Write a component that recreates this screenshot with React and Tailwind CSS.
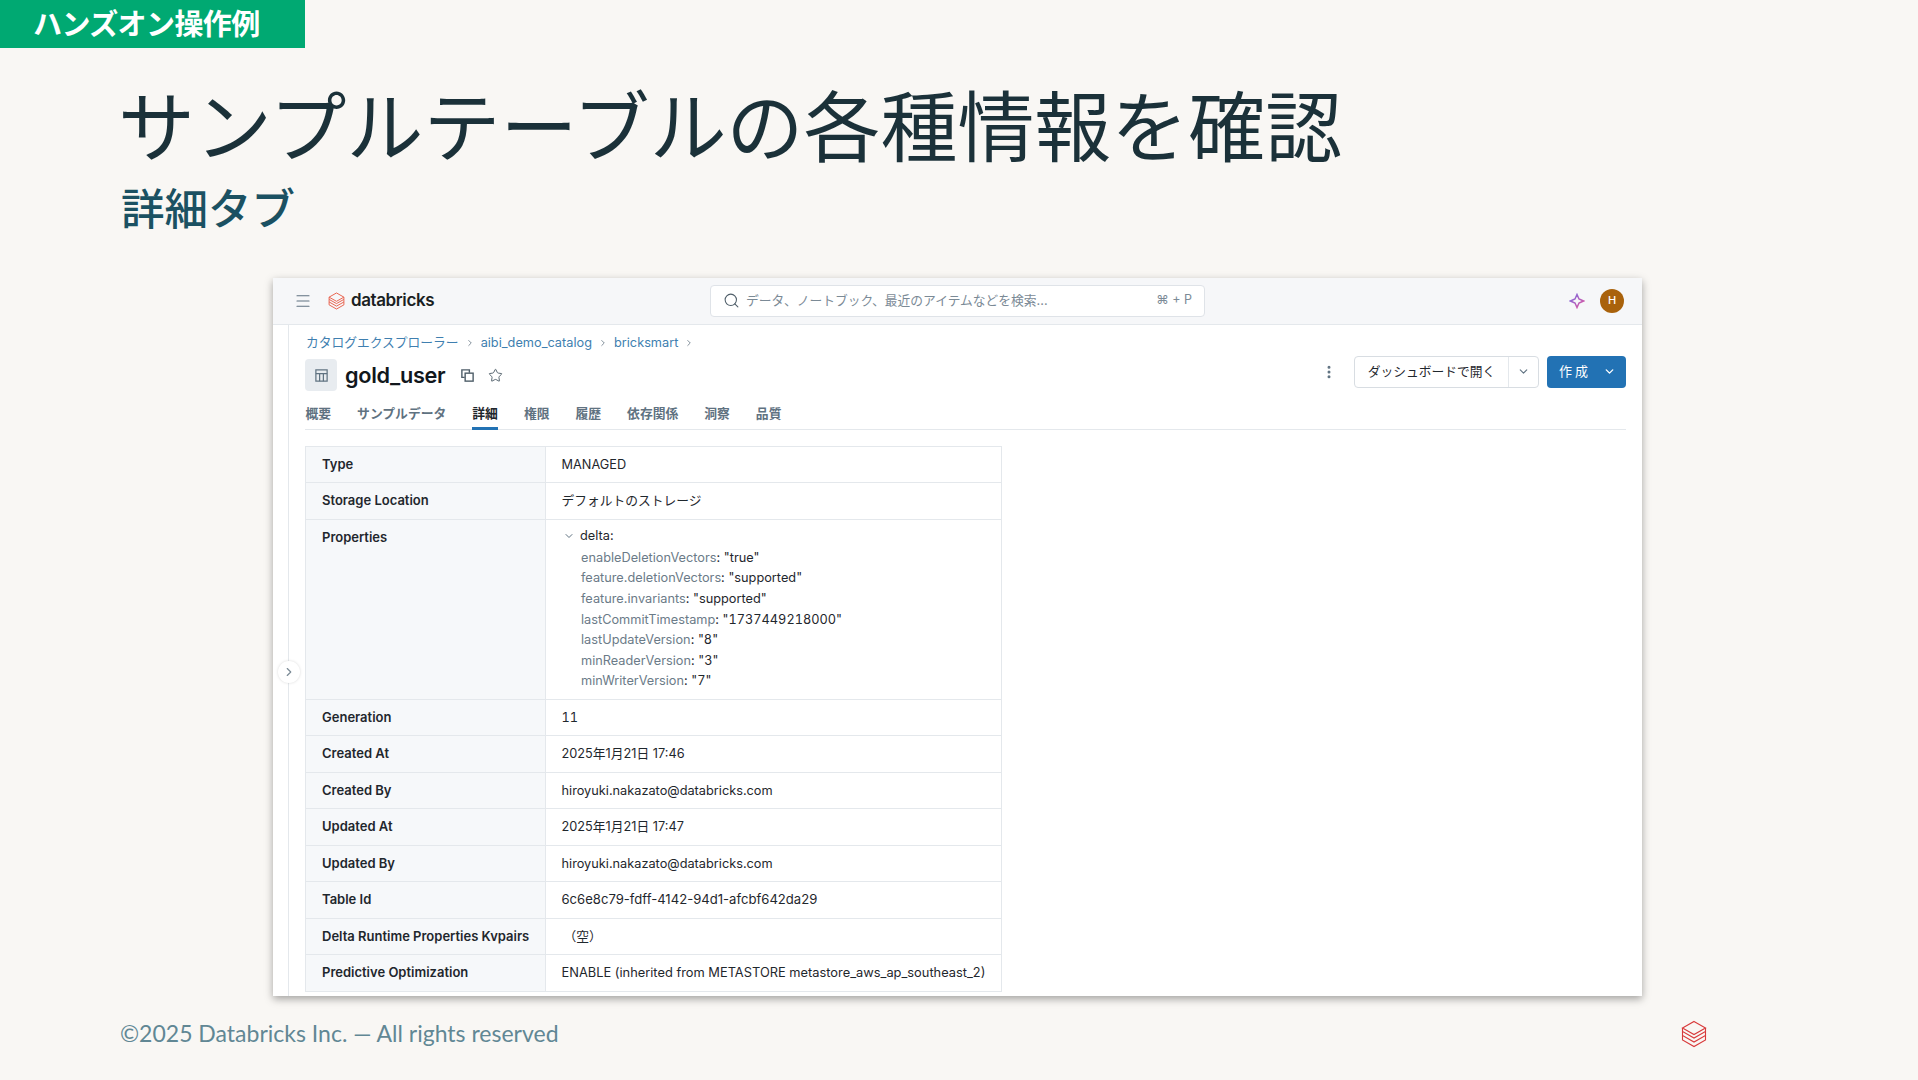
import React from "react";
import { Menu, Search, Star, ChevronDown, ChevronRight, EllipsisVertical } from "lucide-react";

const ui = "font-['Inter','Noto_Sans_CJK_JP',sans-serif]";

function Logo({ className, sw = 1.5 }) {
  return (
    <svg viewBox="0 0 26 28" className={className} fill="none" stroke="currentColor" strokeWidth={sw} strokeLinejoin="miter">
      <path d="M13 1.5 24.5 8 13 14.5 1.5 8Z" />
      <path d="M1.5 8V11.5L13 18 24.5 11.5V8" />
      <path d="M1.5 11.5V15.5L13 22 24.5 15.5V11.5" />
      <path d="M1.5 15.5V20L13 26.5 24.5 20V15.5" />
    </svg>
  );
}

function Row({ label, children, tall }) {
  return (
    <div className={`flex border-b border-[#e4e8ec] ${tall ? "h-[180px]" : "h-[36.5px]"}`}>
      <div className={`w-[240px] shrink-0 bg-[#f6f8fa] border-r border-[#e4e8ec] pl-4 font-semibold text-[13px] text-[#1f272d] ${tall ? "pt-[8.5px]" : "flex items-center"}`}>{label}</div>
      <div className={`flex-1 pl-[15.5px] text-[12.75px] text-[#1f272d] ${tall ? "pt-[8.5px]" : "flex items-center"}`}>{children}</div>
    </div>
  );
}

const props = [
  ["enableDeletionVectors", "true"],
  ["feature.deletionVectors", "supported"],
  ["feature.invariants", "supported"],
  ["lastCommitTimestamp", "1737449218000"],
  ["lastUpdateVersion", "8"],
  ["minReaderVersion", "3"],
  ["minWriterVersion", "7"],
];

const tabs = ["概要", "サンプルデータ", "詳細", "権限", "履歴", "依存関係", "洞察", "品質"];

export default function App() {
  return (
    <div className="w-[1918px] h-[1080px] overflow-hidden bg-[#f9f7f4] flex flex-col font-['Noto_Sans_CJK_JP',sans-serif]">
      <div className="w-[305px] h-[48px] shrink-0 bg-[#00a972] text-white font-bold text-[29px] leading-[45px] pl-[33px] tracking-[-0.6px]">ハンズオン操作例</div>
      <div className="pl-[118px] shrink-0">
        <h1 className="mt-[30px] text-[76.95px] leading-[90px] text-[#1b3139] font-normal whitespace-nowrap">サンプルテーブルの各種情報を確認</h1>
        <h2 className="mt-[10.5px] ml-[3px] text-[43.5px] leading-[56px] text-[#1b5162] font-medium">詳細タブ</h2>
      </div>
      <div className={`relative ml-[273px] mt-[43px] w-[1369px] h-[718px] shrink-0 bg-white shadow-[0_3px_8px_rgba(0,0,0,0.35)] flex flex-col ${ui}`}>
        <div className="h-[47px] shrink-0 bg-[#f6f7f9] border-b border-[#e4e8ec] flex items-center pl-[21px] pr-[16px]">
          <Menu className="w-[18px] h-[18px] text-[#5f7281]" strokeWidth={1.5} />
          <Logo className="w-[17px] h-[18px] ml-[16px] text-[#e8604c]" />
          <span className="ml-[6px] text-[17px] font-semibold tracking-[-0.4px] text-[#1b1f23]">databricks</span>
          <div className="ml-[276px] w-[495px] h-[32px] bg-white border border-[#dfe3e8] rounded flex items-center pl-[12px] pr-[12px] text-[12.75px] text-[#7b8a96]">
            <Search className="w-[17px] h-[17px] text-[#4f5e69]" strokeWidth={1.5} />
            <span className="ml-[6px] flex-1">データ、ノートブック、最近のアイテムなどを検索...</span>
            <span className="text-[12.5px]">⌘ + P</span>
          </div>
          <div className="flex-1" />
          <svg viewBox="0 0 16 16" className="w-[16px] h-[16px] mr-[15px]" fill="none" strokeWidth="1.5">
            <defs>
              <linearGradient id="spark" x1="0" y1="0" x2="1" y2="1">
                <stop offset="0" stopColor="#7a6be0" />
                <stop offset="1" stopColor="#e0559f" />
              </linearGradient>
            </defs>
            <path d="M8 1.5 10 6 14.5 8 10 10 8 14.5 6 10 1.5 8 6 6Z" stroke="url(#spark)" />
          </svg>
          <div className="w-[24px] h-[24px] rounded-full bg-[#a9620c] text-white text-[11px] font-medium flex items-center justify-center mr-[2px]">H</div>
        </div>
        <div className="flex-1 flex min-h-0">
          <div className="w-[16px] shrink-0 border-r border-[#e4e8ec]" />
          <div className="flex-1 pl-[16px] pr-[16px] min-w-0">
            <div className="flex items-center h-[18px] mt-[9px] ml-[1px] text-[12.75px] text-[#3f7fb0] gap-[6px]">
              <span>カタログエクスプローラー</span><ChevronRight className="w-[10px] h-[10px] text-[#6b7b88]" />
              <span>aibi_demo_catalog</span><ChevronRight className="w-[10px] h-[10px] text-[#6b7b88]" />
              <span>bricksmart</span><ChevronRight className="w-[10px] h-[10px] text-[#6b7b88]" />
            </div>
            <div className="flex items-center h-[32px] mt-[7.5px]">
              <div className="w-[32px] h-[32px] rounded bg-[#e8ecf0] flex items-center justify-center">
                <svg viewBox="0 0 16 16" className="w-[15px] h-[15px]" fill="none" stroke="#5f7281" strokeWidth="1.3"><rect x="2" y="2" width="12" height="12" /><path d="M2 6H14M6 6V14M10 6V14" /></svg>
              </div>
              <span className="ml-[8px] text-[21.7px] font-semibold text-[#11171c] tracking-[-0.3px]">gold_user</span>
              <svg viewBox="0 0 16 16" className="ml-[15px] w-[15px] h-[15px]" fill="none" stroke="#4f5e69" strokeWidth="1.5">
                <path d="M10 5V2H2V10H5" />
                <rect x="5.5" y="5.5" width="8.5" height="8.5" />
              </svg>
              <Star className="ml-[13px] w-[15px] h-[15px] text-[#4f5e69]" strokeWidth={1.5} />
              <div className="flex-1" />
              <div className="flex items-center mb-[7px]">
                <EllipsisVertical className="w-[16px] h-[16px] text-[#5f7281] mr-[17px]" strokeWidth={2.5} />
                <div className="h-[32px] w-[185px] border border-[#d8dde2] rounded flex items-center text-[12.75px] text-[#1f272d]">
                  <span className="flex-1 text-center border-r border-[#e4e8ec] h-full leading-[30px]">ダッシュボードで開く</span>
                  <span className="w-[29px] flex justify-center"><ChevronDown className="w-[13px] h-[13px] text-[#5f7281]" /></span>
                </div>
                <div className="ml-[8px] h-[32px] w-[79px] rounded bg-[#2272b4] text-white text-[13px] flex items-center pl-[12px] tracking-[3px]">
                  <span className="flex-1">作成</span>
                  <ChevronDown className="w-[13px] h-[13px] mr-[10px]" strokeWidth={2.5} />
                </div>
              </div>
            </div>
            <div className="flex gap-[26px] mt-[9px] h-[29.5px] pl-[0.5px] border-b border-[#e4e8ec] text-[12.8px] font-semibold text-[#5f7281]">
              {tabs.map((t, i) => (
                <div key={t} className={`h-[29.5px] leading-[28px] ${i === 2 ? "text-[#1f272d] border-b-[3px] border-[#2272b4]" : ""}`}>{t}</div>
              ))}
            </div>
            <div className="mt-[16px] w-[697px] border border-[#e4e8ec] border-b-0">
              <Row label="Type">MANAGED</Row>
              <Row label="Storage Location">デフォルトのストレージ</Row>
              <Row label="Properties" tall>
                <div className="flex items-center h-[16px] ml-[1.5px]">
                  <ChevronDown className="w-[12px] h-[12px] text-[#5f7281] mr-[5px]" />
                  <span>delta:</span>
                </div>
                <div className="pl-[19.5px] mt-[3.8px]">
                  {props.map(([k, v]) => (
                    <div key={k} className="h-[20.6px] leading-[20.6px] whitespace-nowrap"><span className="text-[#6b7b88]">{k}</span>: <span className="tabular-nums">"{v}"</span></div>
                  ))}
                </div>
              </Row>
              <Row label="Generation"><span className="tabular-nums">11</span></Row>
              <Row label="Created At">2025年1月21日 17:46</Row>
              <Row label="Created By">hiroyuki.nakazato@databricks.com</Row>
              <Row label="Updated At">2025年1月21日 17:47</Row>
              <Row label="Updated By">hiroyuki.nakazato@databricks.com</Row>
              <Row label="Table Id"><span className="text-[13.1px]">6c6e8c79-fdff-4142-94d1-afcbf642da29</span></Row>
              <Row label="Delta Runtime Properties Kvpairs"><span className="pl-[2px]">（空）</span></Row>
              <Row label="Predictive Optimization"><span className="text-[12.85px]">ENABLE (inherited from METASTORE metastore_aws_ap_southeast_2)</span></Row>
            </div>
          </div>
        </div>
        <div className="absolute left-[5px] top-[383px] w-[22px] h-[22px] rounded-full bg-white shadow-[0_0_3px_rgba(0,0,0,0.15)] flex items-center justify-center">
          <ChevronRight className="w-[14px] h-[14px] text-[#7b8a96]" />
        </div>
      </div>
      <div className="flex items-center pl-[120px] mt-[22px] h-[32px] text-[23px] text-[#618794] font-['Lato',sans-serif] shrink-0">
        <span className="w-[1560px]">©2025 Databricks Inc. — All rights reserved</span>
        <Logo sw={1.1} className="w-[26px] h-[28px] ml-[1px] text-[#d8393a]" />
      </div>
    </div>
  );
}
